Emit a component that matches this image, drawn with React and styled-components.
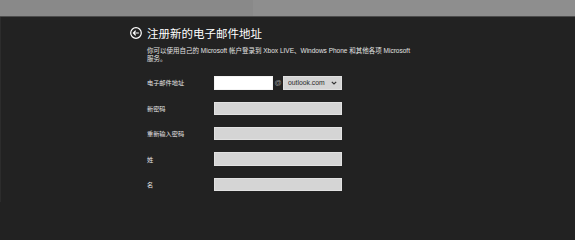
import React from "react";
import styled, { createGlobalStyle } from "styled-components";

const Global = createGlobalStyle`
  html, body { margin: 0; padding: 0; background: #222222; }
  body { width: 575px; height: 202px; overflow: hidden; }
  #root { width: 575px; height: 202px; }
`;

const Page = styled.div`
  width: 575px;
  height: 202px;
  display: flex;
  flex-direction: column;
  background: #222222;
  font-family: "Liberation Sans", "Noto Sans CJK SC", sans-serif;
  color: #e8e8e8;
  overflow: hidden;
`;

const TopBar = styled.div`
  height: 16px;
  display: flex;
  border-bottom: 1px solid #4c4c4c;
  flex-shrink: 0;
`;

const BarPart = styled.div`
  height: 100%;
  background: ${(p) => p.$tone};
  width: ${(p) => (p.$w ? `${p.$w}px` : "auto")};
  flex: ${(p) => (p.$w ? "none" : "1")};
`;

const Main = styled.div`
  flex: 1;
  padding: 10px 0 0 129px;
  border-left: 1px solid #2c2c2c;
`;

const Header = styled.div`
  display: flex;
  align-items: center;
  gap: 5px;
  height: 12px;
`;

const Title = styled.h1`
  margin: 0;
  font-family: "Noto Sans CJK SC", sans-serif;
  font-weight: 400;
  font-size: 11.5px;
  line-height: 12px;
  color: #ffffff;
  white-space: nowrap;
`;

const Description = styled.p`
  margin: 8px 0 0 17px;
  font-size: 6.5px;
  line-height: 7.6px;
  color: #e2e2e2;
  white-space: nowrap;
`;

const Form = styled.div`
  margin: 14px 0 0 17px;
  display: flex;
  flex-direction: column;
  gap: 11.9px;
`;

const Row = styled.div`
  display: flex;
  align-items: center;
  height: 13.5px;
`;

const Label = styled.span`
  width: 67px;
  font-size: 6.2px;
  color: #e6e6e6;
  white-space: nowrap;
`;

const Field = styled.div`
  box-sizing: border-box;
  width: ${(p) => p.$w}px;
  height: 13.5px;
  background: ${(p) => (p.$white ? "#ffffff" : "#d5d5d5")};
  border: 1px solid ${(p) => (p.$white ? "#f4f4f4" : "#e2e2e2")};
`;

const At = styled.span`
  width: 10px;
  text-align: center;
  font-size: 7px;
  color: #9a9a9a;
`;

const Select = styled.div`
  box-sizing: border-box;
  width: 59px;
  height: 13.5px;
  background: #d4d4d4;
  border: 1px solid #e0e0e0;
  display: flex;
  align-items: center;
  justify-content: space-between;
  padding: 0 4px 0 4px;
  font-size: 6.8px;
  color: #2a2a2a;
`;

const BackIcon = () => (
  <svg width="12" height="12" viewBox="0 0 12 12">
    <circle cx="6" cy="6" r="5.3" fill="none" stroke="#fff" strokeWidth="1.2" />
    <path d="M8.9 6H3.4M5.7 3.7L3.4 6l2.3 2.3" fill="none" stroke="#fff" strokeWidth="1.2" />
  </svg>
);

const Chevron = () => (
  <svg width="6" height="4" viewBox="0 0 6 4">
    <path d="M0.8 0.8L3 3l2.2-2.2" fill="none" stroke="#333" strokeWidth="1.2" />
  </svg>
);

const fields = ["新密码", "重新输入密码", "姓", "名"];

export default function App() {
  return (
    <Page>
      <Global />
      <TopBar>
        <BarPart $w={253} $tone="#898989" />
        <BarPart $tone="#8e8e8e" />
      </TopBar>
      <Main>
        <Header>
          <BackIcon />
          <Title>注册新的电子邮件地址</Title>
        </Header>
        <Description>
          你可以使用自己的 Microsoft 帐户登录到 Xbox LIVE、Windows Phone 和其他各项 Microsoft
          <br />
          服务。
        </Description>
        <Form>
          <Row>
            <Label>电子邮件地址</Label>
            <Field $w={59} $white />
            <At>@</At>
            <Select>
              <span>outlook.com</span>
              <Chevron />
            </Select>
          </Row>
          {fields.map((f) => (
            <Row key={f}>
              <Label>{f}</Label>
              <Field $w={128} />
            </Row>
          ))}
        </Form>
      </Main>
    </Page>
  );
}
